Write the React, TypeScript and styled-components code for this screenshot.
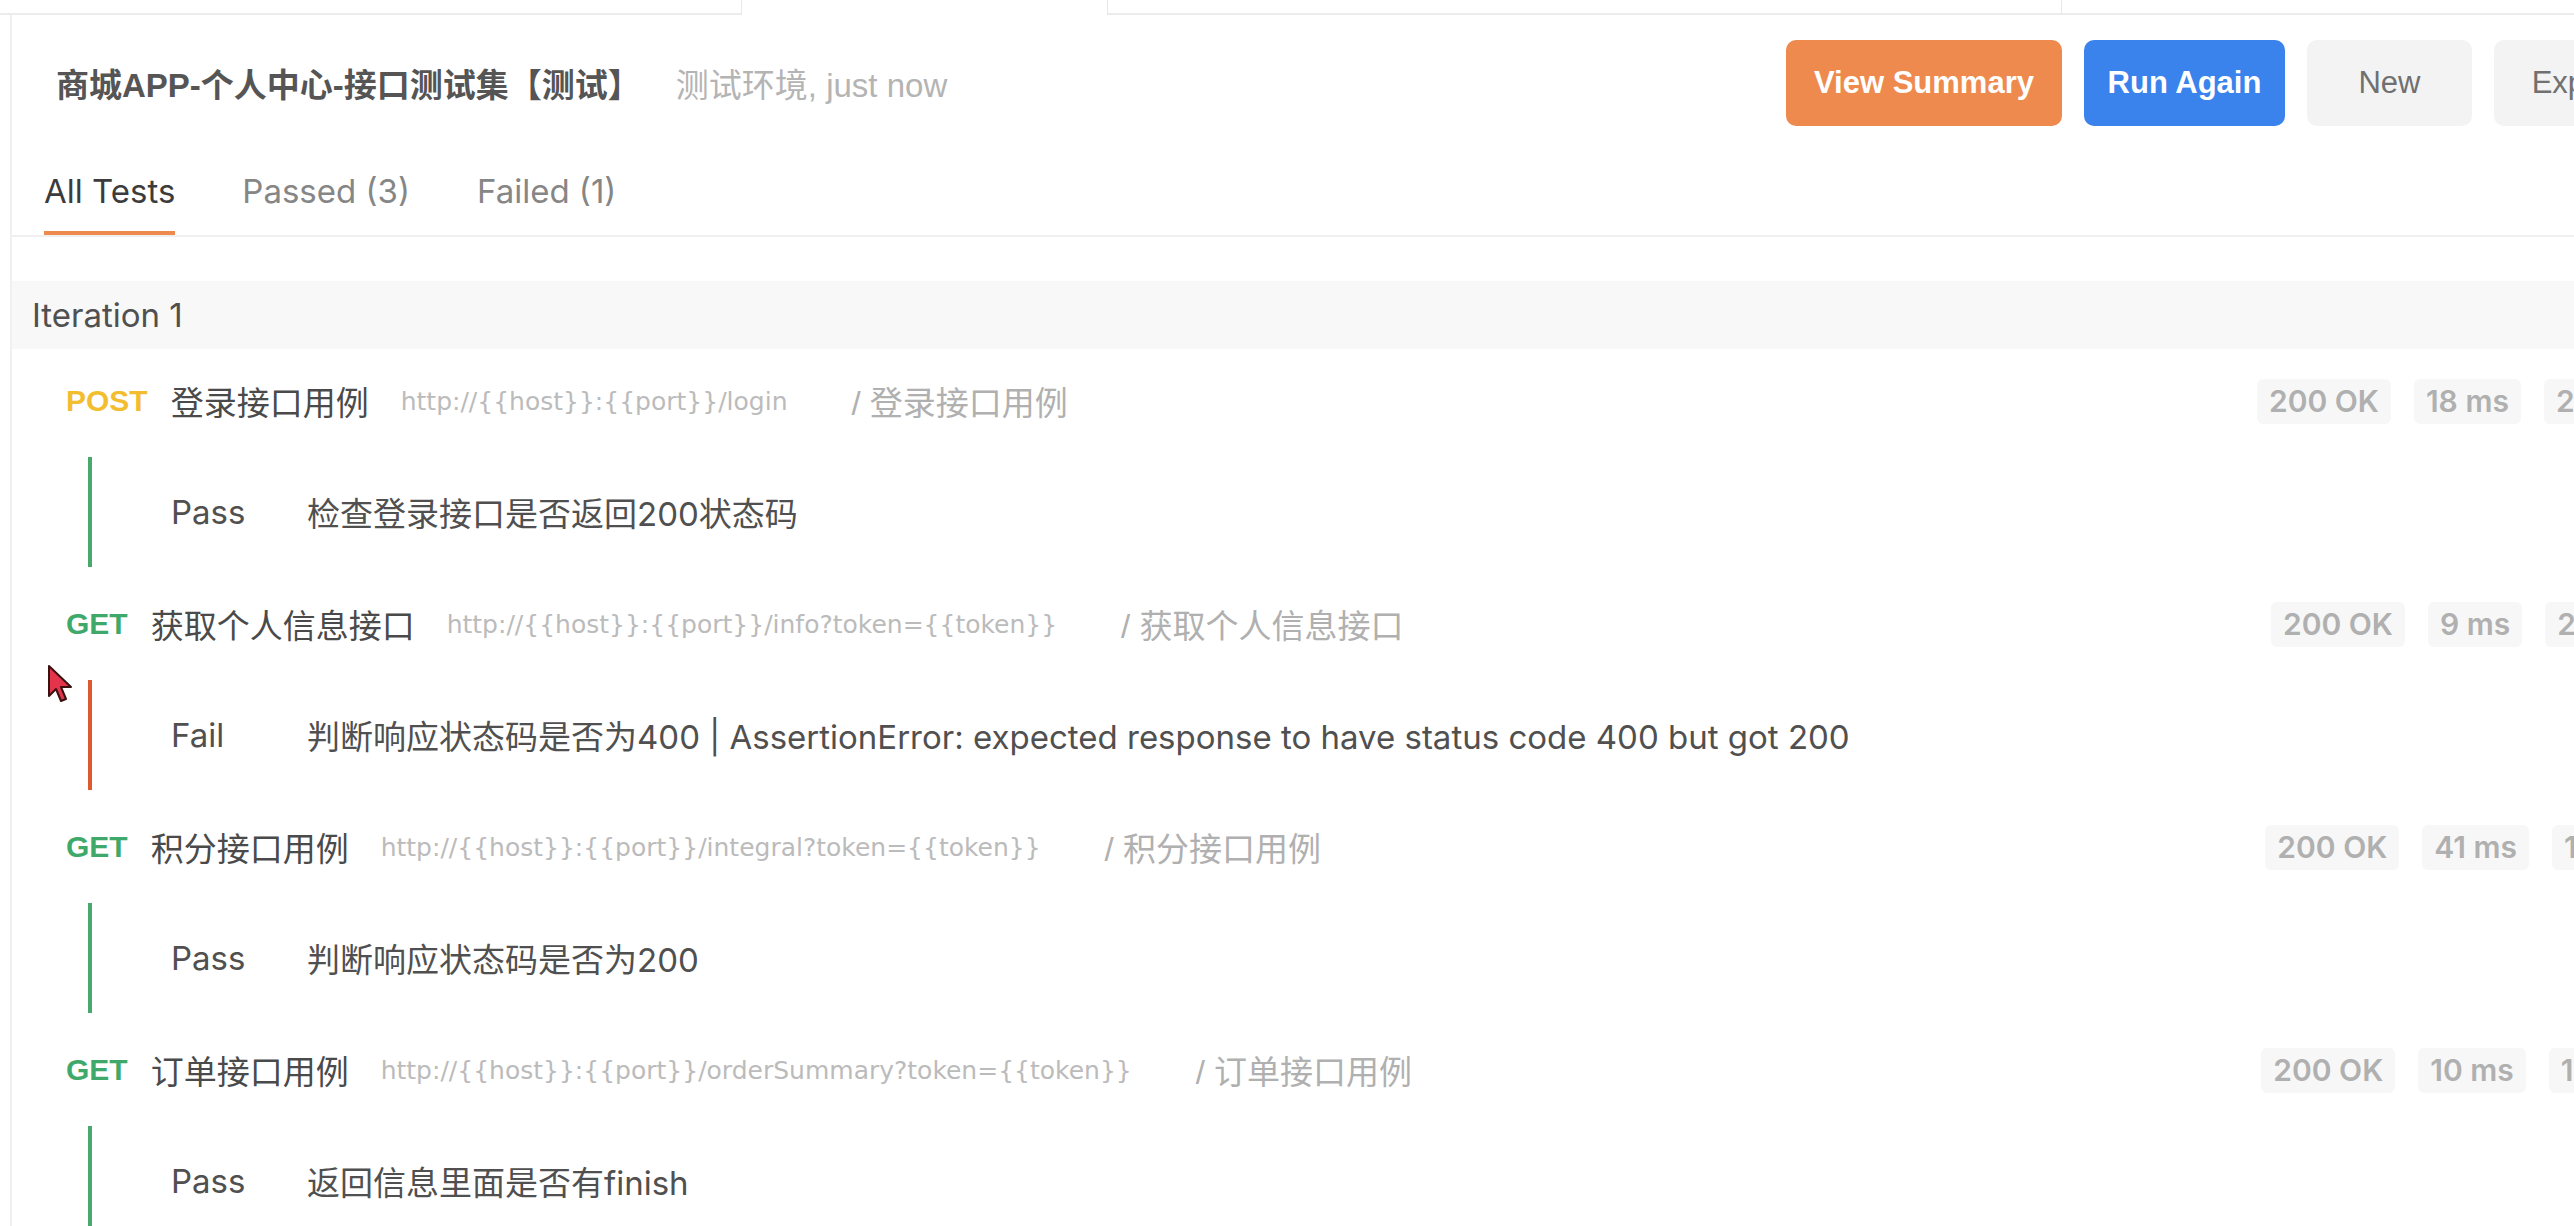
import React from "react";
import styled, { createGlobalStyle } from "styled-components";

const GlobalStyle = createGlobalStyle`
  html, body {
    margin: 0;
    padding: 0;
    background: #fff;
    overflow: hidden;
  }
  body {
    font-family: "Liberation Sans", "Noto Sans CJK SC", sans-serif;
    color: #505050;
  }
`;

const Page = styled.div`
  position: relative;
  width: 2712px;
  height: 1226px;
  overflow: hidden;
  background: #fff;
`;

const TopStrip = styled.div`
  display: flex;
  height: 15px;
`;

const StubTab = styled.div<{ $w?: number; $active?: boolean }>`
  flex: ${(p) => (p.$w ? `0 0 ${p.$w}px` : "1 1 auto")};
  box-sizing: border-box;
  border-right: 1px solid #e8e8e8;
  border-bottom: ${(p) => (p.$active ? "none" : "2px solid #ececec")};
`;

const Shell = styled.div`
  display: flex;
  align-items: stretch;
  min-height: 1211px;
`;

const Rail = styled.div`
  flex: 0 0 10px;
  border-right: 2px solid #f0f0f0;
`;

const Main = styled.div`
  flex: 1 1 auto;
  min-width: 0;
`;

const Header = styled.div`
  height: 136px;
  display: flex;
  align-items: center;
  justify-content: space-between;
  padding: 0 53px 0 44px;
`;

const TitleGroup = styled.div`
  display: flex;
  align-items: baseline;
  gap: 35px;
`;

const Title = styled.div`
  font-size: 33px;
  font-weight: 700;
  color: #555;
`;

const Subtitle = styled.div`
  font-size: 33px;
  color: #b4b4b4;
`;

const ButtonGroup = styled.div`
  display: flex;
  gap: 22px;
`;

const Button = styled.button<{ $kind: "orange" | "blue" | "plain"; $w: number }>`
  width: ${(p) => p.$w}px;
  height: 86px;
  border: none;
  border-radius: 10px;
  font-family: inherit;
  font-size: 31px;
  font-weight: ${(p) => (p.$kind === "plain" ? 400 : 700)};
  color: ${(p) => (p.$kind === "plain" ? "#707070" : "#fff")};
  background: ${(p) =>
    p.$kind === "orange" ? "#ee8a4e" : p.$kind === "blue" ? "#3a82ec" : "#f3f3f3"};
  white-space: nowrap;
  padding: 0;
  cursor: pointer;
`;

const Tabs = styled.div`
  height: 86px;
  box-sizing: border-box;
  display: flex;
  gap: 67px;
  padding-left: 32px;
  border-bottom: 2px solid #efefef;
`;

const TabItem = styled.div<{ $active?: boolean }>`
  display: flex;
  align-items: center;
  font-family: Inter, "Noto Sans CJK SC", sans-serif;
  font-size: 33px;
  color: ${(p) => (p.$active ? "#3c3c3c" : "#868686")};
  border-bottom: 4px solid ${(p) => (p.$active ? "#ee8a4e" : "transparent")};
`;

const IterationBar = styled.div`
  margin-top: 44px;
  height: 68px;
  display: flex;
  align-items: center;
  padding-left: 20px;
  background: #f8f8f8;
  font-family: Inter, "Noto Sans CJK SC", sans-serif;
  font-size: 33px;
  color: #505050;
`;

const RequestList = styled.div`
  padding-top: 16px;
`;

const RequestHeader = styled.div`
  height: 72px;
  display: flex;
  align-items: center;
  padding: 0 60px 0 54px;
  white-space: nowrap;
`;

const Method = styled.span<{ $color: string }>`
  font-size: 30px;
  font-weight: 700;
  color: ${(p) => p.$color};
  margin-right: 23px;
`;

const ReqName = styled.span`
  font-size: 33px;
  color: #4a4a4a;
  margin-right: 32px;
`;

const Url = styled.span`
  font-family: "DejaVu Sans", "Noto Sans CJK SC", sans-serif;
  font-size: 25px;
  color: #bbbbbb;
  margin-right: 64px;
`;

const Folder = styled.span`
  font-size: 33px;
  color: #b0b0b0;
`;

const Chips = styled.div`
  margin-left: auto;
  display: flex;
  gap: 23px;
`;

const Chip = styled.span`
  height: 45px;
  display: flex;
  align-items: center;
  padding: 0 12px;
  border-radius: 6px;
  background: #f7f7f7;
  color: #b0b0b0;
  font-family: Inter, "Liberation Sans", sans-serif;
  font-size: 30px;
  font-weight: 600;
`;

const ResultBlock = styled.div<{ $color: string }>`
  margin: 20px 0 21px 76px;
  height: 110px;
  box-sizing: border-box;
  border-left: 4px solid ${(p) => p.$color};
  display: flex;
  align-items: center;
  padding-left: 79px;
  font-family: Inter, "Noto Sans CJK SC", sans-serif;
  font-size: 33px;
  color: #505050;
  white-space: nowrap;
`;

const ResultLabel = styled.span`
  flex: 0 0 136px;
`;

const Cursor = styled.svg`
  position: absolute;
  left: 47px;
  top: 664px;
`;

type Req = {
  method: "GET" | "POST";
  name: string;
  url: string;
  folder: string;
  time: string;
  size: string;
  result: { pass: boolean; text: string };
};

const requests: Req[] = [
  {
    method: "POST",
    name: "登录接口用例",
    url: "http://{{host}}:{{port}}/login",
    folder: "/ 登录接口用例",
    time: "18 ms",
    size: "285 B",
    result: { pass: true, text: "检查登录接口是否返回200状态码" },
  },
  {
    method: "GET",
    name: "获取个人信息接口",
    url: "http://{{host}}:{{port}}/info?token={{token}}",
    folder: "/ 获取个人信息接口",
    time: "9 ms",
    size: "247 B",
    result: {
      pass: false,
      text: "判断响应状态码是否为400 | AssertionError: expected response to have status code 400 but got 200",
    },
  },
  {
    method: "GET",
    name: "积分接口用例",
    url: "http://{{host}}:{{port}}/integral?token={{token}}",
    folder: "/ 积分接口用例",
    time: "41 ms",
    size: "173 B",
    result: { pass: true, text: "判断响应状态码是否为200" },
  },
  {
    method: "GET",
    name: "订单接口用例",
    url: "http://{{host}}:{{port}}/orderSummary?token={{token}}",
    folder: "/ 订单接口用例",
    time: "10 ms",
    size: "194 B",
    result: { pass: true, text: "返回信息里面是否有finish" },
  },
];

export default function App() {
  return (
    <Page>
      <GlobalStyle />
      <TopStrip>
        <StubTab $w={742} />
        <StubTab $w={366} $active />
        <StubTab $w={954} />
        <StubTab />
      </TopStrip>
      <Shell>
        <Rail />
        <Main>
          <Header>
            <TitleGroup>
              <Title>商城APP-个人中心-接口测试集【测试】</Title>
              <Subtitle>测试环境, just now</Subtitle>
            </TitleGroup>
            <ButtonGroup>
              <Button $kind="orange" $w={276}>View Summary</Button>
              <Button $kind="blue" $w={201}>Run Again</Button>
              <Button $kind="plain" $w={165}>New</Button>
              <Button $kind="plain" $w={165}>Export</Button>
            </ButtonGroup>
          </Header>
          <Tabs>
            <TabItem $active>All Tests</TabItem>
            <TabItem>Passed (3)</TabItem>
            <TabItem>Failed (1)</TabItem>
          </Tabs>
          <IterationBar>Iteration 1</IterationBar>
          <RequestList>
            {requests.map((r) => (
              <div key={r.url}>
                <RequestHeader>
                  <Method $color={r.method === "POST" ? "#f2be30" : "#3fa96b"}>{r.method}</Method>
                  <ReqName>{r.name}</ReqName>
                  <Url>{r.url}</Url>
                  <Folder>{r.folder}</Folder>
                  <Chips>
                    <Chip>200 OK</Chip>
                    <Chip>{r.time}</Chip>
                    <Chip>{r.size}</Chip>
                  </Chips>
                </RequestHeader>
                <ResultBlock $color={r.result.pass ? "#48a86e" : "#dd5a2f"}>
                  <ResultLabel>{r.result.pass ? "Pass" : "Fail"}</ResultLabel>
                  <span>{r.result.text}</span>
                </ResultBlock>
              </div>
            ))}
          </RequestList>
        </Main>
      </Shell>
      <Cursor width="28" height="40" viewBox="0 0 28 40">
        <path
          d="M2 2 L2 32 L9 25 L14 37 L19 35 L14 23 L24 23 Z"
          fill="#e3344c"
          stroke="#3a1010"
          strokeWidth="2"
          strokeLinejoin="round"
        />
      </Cursor>
    </Page>
  );
}
